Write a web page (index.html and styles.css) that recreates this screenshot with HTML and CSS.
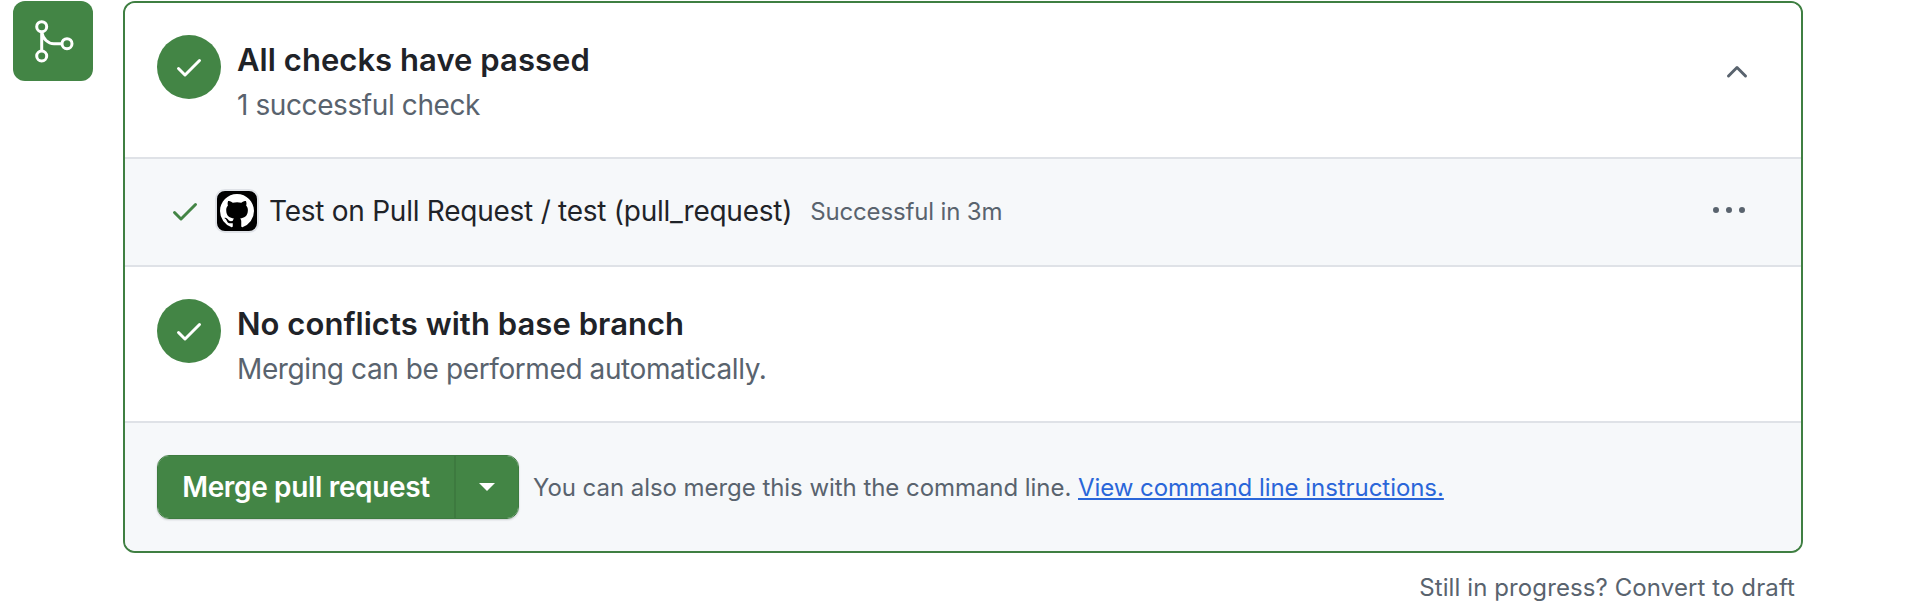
FILE: index.html
```html
<!DOCTYPE html>
<html lang="en">
<head>
  <meta charset="UTF-8">
  <meta name="viewport" content="width=device-width, initial-scale=1.0">
  <title>Merge pull request</title>
  <link rel="stylesheet" href="styles.css">
</head>
<body>
  <div class="merge-row">
    <div class="state-icon">
      <svg width="48" height="48" viewBox="0 0 48 48" fill="none" stroke="#fff" stroke-width="3"><circle cx="12.7" cy="9.7" r="5"/><circle cx="12.7" cy="39" r="5"/><circle cx="38" cy="26.7" r="5"/><path d="M12.7 14.7V34M12.7 15C14 22 19 26.7 25 26.7H33"/></svg>
    </div>

    <div class="merge-content">
      <div class="merge-box">
        <section class="status-section has-toggle">
          <div class="status-circle">
            <svg width="32" height="32" viewBox="0 0 16 16" fill="#fff"><path d="M13.78 4.22a.75.75 0 0 1 0 1.06l-7.25 7.25a.75.75 0 0 1-1.06 0L2.22 9.28a.751.751 0 0 1 .018-1.042.751.751 0 0 1 1.042-.018L6 10.94l6.72-6.72a.75.75 0 0 1 1.06 0Z"/></svg>
          </div>
          <div class="status-text">
            <h3>All checks have passed</h3>
            <p>1 successful check</p>
          </div>
          <svg class="chevron" width="32" height="32" viewBox="0 0 16 16" fill="#59636e"><path d="M3.22 10.53a.749.749 0 0 1 0-1.06l4.25-4.25a.749.749 0 0 1 1.06 0l4.25 4.25a.749.749 0 0 1-1.06 1.06L8 6.811 4.28 10.53a.749.749 0 0 1-1.06 0Z"/></svg>
        </section>

        <section class="check-row">
          <svg width="32" height="32" viewBox="0 0 16 16" fill="#438545"><path d="M13.78 4.22a.75.75 0 0 1 0 1.06l-7.25 7.25a.75.75 0 0 1-1.06 0L2.22 9.28a.751.751 0 0 1 .018-1.042.751.751 0 0 1 1.042-.018L6 10.94l6.72-6.72a.75.75 0 0 1 1.06 0Z"/></svg>
          <div class="check-avatar">
            <svg width="34" height="34" viewBox="0 0 16 16" fill="#fff"><path d="M8 0c4.42 0 8 3.58 8 8a8.013 8.013 0 0 1-5.45 7.59c-.4.08-.55-.17-.55-.38 0-.27.01-1.13.01-2.2 0-.75-.25-1.23-.54-1.48 1.78-.2 3.65-.88 3.65-3.95 0-.88-.31-1.59-.82-2.15.08-.2.36-1.02-.08-2.12 0 0-.67-.22-2.2.82-.64-.18-1.32-.27-2-.27-.68 0-1.36.09-2 .27-1.53-1.03-2.2-.82-2.2-.82-.44 1.1-.16 1.92-.08 2.12-.51.56-.82 1.28-.82 2.15 0 3.06 1.86 3.75 3.64 3.95-.23.2-.44.55-.51 1.07-.46.21-1.61.55-2.33-.66-.15-.24-.6-.83-1.23-.82-.67.01-.27.38.01.53.34.19.73.9.82 1.13.16.45.68 1.31 2.69.94 0 .67.01 1.3.01 1.49 0 .21-.15.45-.55.38A7.995 7.995 0 0 1 0 8c0-4.42 3.58-8 8-8Z"/></svg>
          </div>
          <span class="check-name">Test on Pull Request / test (pull_request)</span>
          <span class="check-time">Successful in 3m</span>
          <svg class="kebab" width="32" height="32" viewBox="0 0 16 16" fill="#59636e"><path d="M8 9a1.5 1.5 0 1 0 0-3 1.5 1.5 0 0 0 0 3ZM1.5 9a1.5 1.5 0 1 0 0-3 1.5 1.5 0 0 0 0 3Zm13 0a1.5 1.5 0 1 0 0-3 1.5 1.5 0 0 0 0 3Z"/></svg>
        </section>

        <section class="status-section">
          <div class="status-circle">
            <svg width="32" height="32" viewBox="0 0 16 16" fill="#fff"><path d="M13.78 4.22a.75.75 0 0 1 0 1.06l-7.25 7.25a.75.75 0 0 1-1.06 0L2.22 9.28a.751.751 0 0 1 .018-1.042.751.751 0 0 1 1.042-.018L6 10.94l6.72-6.72a.75.75 0 0 1 1.06 0Z"/></svg>
          </div>
          <div class="status-text">
            <h3>No conflicts with base branch</h3>
            <p>Merging can be performed automatically.</p>
          </div>
        </section>

        <section class="merge-actions">
          <div class="merge-button">
            <button class="merge-main">Merge pull request</button>
            <button class="merge-caret"><span class="caret"></span></button>
          </div>
          <p class="merge-hint">You can also merge this with the command line. <a href="#">View command line instructions.</a></p>
        </section>
      </div>

      <p class="draft-link">Still in progress? Convert to draft</p>
    </div>
  </div>
</body>
</html>
```

FILE: styles.css
```css
* {
  margin: 0;
  padding: 0;
  box-sizing: border-box;
  font-family: Inter, "Liberation Sans", sans-serif;
}

body {
  background-color: #fff;
  color: #1f2328;
}

.merge-row {
  display: flex;
  align-items: flex-start;
  gap: 30px;
  padding: 1px 0 0 13px;
}

.state-icon {
  display: flex;
  align-items: center;
  justify-content: center;
  width: 80px;
  height: 80px;
  background-color: #438545;
  border-radius: 12px;
}

.merge-content {
  width: 1680px;
}

.merge-box {
  border: 2px solid #3f7f42;
  border-radius: 12px;
  overflow: hidden;
}

.status-section {
  display: flex;
  align-items: flex-start;
  gap: 16px;
  padding: 32px;
  background-color: #fff;
}

.status-circle {
  display: flex;
  align-items: center;
  justify-content: center;
  flex-shrink: 0;
  width: 64px;
  height: 64px;
  background-color: #438545;
  border-radius: 50%;
}

.status-text h3 {
  font-size: 31px;
  font-weight: 600;
  line-height: 50px;
  letter-spacing: 0.05px;
}

.status-text p {
  font-size: 28px;
  line-height: 40px;
  letter-spacing: -0.4px;
  color: #59636e;
}

.chevron {
  margin: 21px 16px 0 auto;
}

.check-row {
  display: flex;
  align-items: center;
  height: 110px;
  padding: 0 56px 2px 44px;
  background-color: #f6f8fa;
  border-top: 2px solid #dfe2e7;
  border-bottom: 2px solid #dfe2e7;
}

.check-avatar {
  display: flex;
  align-items: center;
  justify-content: center;
  width: 44px;
  height: 44px;
  margin: 0 10px 0 14px;
  background-color: #000;
  border: 2px solid #dfe2e7;
  border-radius: 10px;
}

.check-name {
  font-size: 28px;
  letter-spacing: -0.25px;
}

.check-time {
  margin-left: 18px;
  font-size: 24px;
  letter-spacing: -0.15px;
  color: #59636e;
}

.kebab {
  margin-left: auto;
}

.merge-actions {
  display: flex;
  align-items: center;
  gap: 14px;
  padding: 32px;
  background-color: #f6f8fa;
  border-top: 2px solid #dfe2e7;
}

.merge-button {
  display: flex;
  height: 64px;
  border: 1px solid #3e7b40;
  border-radius: 12px;
  overflow: hidden;
  box-shadow: 0 1px 2px rgba(31, 35, 40, 0.2);
}

.merge-button button {
  height: 100%;
  color: #fff;
  background-color: #438545;
  border: none;
  cursor: pointer;
}

.merge-main {
  width: 298px;
  font-size: 28px;
  font-weight: 600;
  letter-spacing: -0.34px;
  border-right: 2px solid #3d7a3f !important;
}

.merge-caret {
  display: flex;
  align-items: center;
  justify-content: center;
  width: 62px;
}

.caret {
  border-top: 8px solid #fff;
  border-left: 8px solid transparent;
  border-right: 8px solid transparent;
}

.merge-hint {
  font-size: 24px;
  letter-spacing: -0.05px;
  color: #59636e;
}

.merge-hint a {
  color: #2a66d9;
}

.draft-link {
  margin-top: 20px;
  padding-right: 8px;
  text-align: right;
  font-size: 24px;
  line-height: 30px;
  letter-spacing: 0.1px;
  color: #59636e;
}
```
